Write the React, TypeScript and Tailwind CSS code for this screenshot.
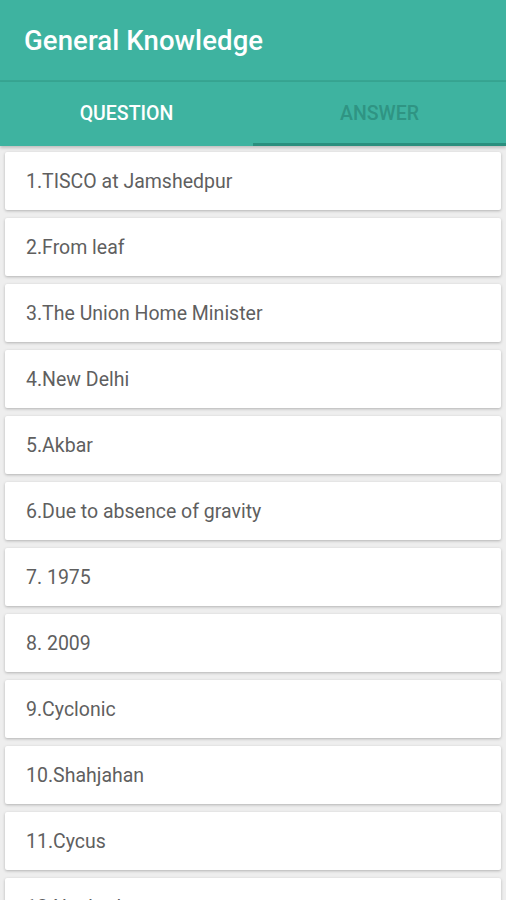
const answers = [
  "1.TISCO at Jamshedpur",
  "2.From leaf",
  "3.The Union Home Minister",
  "4.New Delhi",
  "5.Akbar",
  "6.Due to absence of gravity",
  "7. 1975",
  "8. 2009",
  "9.Cyclonic",
  "10.Shahjahan",
  "11.Cycus",
  "12.Nephrology",
];

export default function App() {
  return (
    <div className="h-[900px] w-[506px] overflow-hidden bg-[#eeeeee] font-['Roboto',sans-serif]">
      <div className="h-[80px] bg-[#3eb3a0] flex items-center px-6">
        <h1 className="text-white text-[27.5px] font-medium tracking-[0.1px] pt-[2px]">General Knowledge</h1>
      </div>
      <div className="h-[2px] bg-[#37a592]" />
      <div className="relative flex h-[64px] bg-[#3eb3a0] shadow-[0_2px_3px_rgba(0,0,0,0.2)]">
        <div className="flex-1 flex items-center justify-center text-white text-[19.5px] font-medium">QUESTION</div>
        <div className="flex-1 flex items-center justify-center text-[#2f9483] text-[19.5px] font-medium">ANSWER</div>
        <div className="absolute bottom-0 right-0 h-[3px] w-1/2 bg-[#2a8f7e]" />
      </div>
      <div className="flex flex-col gap-2 px-[5px] pt-[6px]">
        {answers.map((a) => (
          <div
            key={a}
            className="h-[58px] shrink-0 bg-white rounded-[2px] shadow-[0_1px_3px_rgba(0,0,0,0.25)] flex items-center pl-[21px] pt-[2px] text-[19.5px] text-[#5f5f5f]"
          >
            {a}
          </div>
        ))}
      </div>
    </div>
  );
}
